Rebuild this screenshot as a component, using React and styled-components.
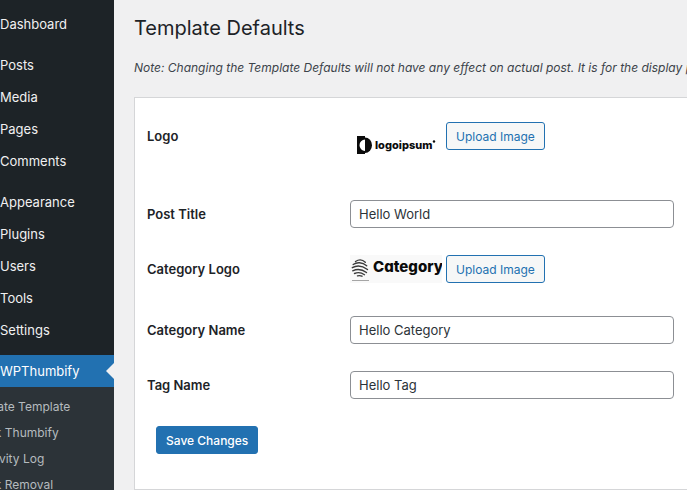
import React from "react";
import styled, { createGlobalStyle } from "styled-components";

const menuGroups = [
    ["Dashboard"],
    ["Posts", "Media", "Pages", "Comments"],
    ["Appearance", "Plugins", "Users", "Tools", "Settings"],
];

const subMenu = ["Create Template", "Bulk Thumbify", "Activity Log", "Bulk Removal"];

const LogoIpsum = () => (
    <svg width="92" height="46" viewBox="0 0 92 46" role="img" aria-label="logoipsum">
        <path d="M7 14h8v3.500a5.500 5.700 0 0 0 0 11.400V32H7z" fill="#0b0b0b" />
        <path d="M15 15.500a7 7.700 0 0 1 0 15.400z" fill="#0b0b0b" />
        <LogoText x="25" y="27" fontSize="11">logoipsum</LogoText>
        <circle cx="84" cy="19.500" r="1.200" fill="#0b0b0b" />
    </svg>
);

const CategoryLogo = () => (
    <svg width="92" height="28" viewBox="0 0 92 28" role="img" aria-label="Category">
        <rect width="92" height="28" fill="#f9f9f9" />
        <g fill="none" stroke="#3a3a3a" strokeWidth="1.400" strokeLinecap="round">
            <path d="M5.500 6.500c3-2 7-2 9.800.8" />
            <path d="M3.200 9.500c3.500-2.500 9-2.500 13.500 1.300" />
            <path d="M2.300 12.700c4.500-2.500 10-2 15.200 1.800" />
            <path d="M2.700 15.800c4.500-2.200 9.500-1.500 13.800 1.700" />
            <path d="M4.500 18.500c3.500-1.500 7-.900 10 1.200" />
            <path d="M7.500 20.900c1.500-.400 3.500-.200 4.500.300" />
        </g>
        <path d="M2 25.500h17" stroke="#a5a5a5" strokeWidth="1" />
        <LogoText x="23" y="17" fontSize="15">Category</LogoText>
    </svg>
);

const App = () => {
    const [values, setValues] = React.useState({
        title: "Hello World",
        category: "Hello Category",
        tag: "Hello Tag",
    });

    const onChange = (e) => {
        setValues({ ...values, [e.target.name]: e.target.value });
    };

    const renderField = (name, label) => (
        <Row>
            <Label as="label" htmlFor={name}>{label}</Label>
            <TextInput id={name} name={name} type="text" value={values[name]} onChange={onChange} />
        </Row>
    );

    return (
        <Page>
            <GlobalStyle />
            <Sidebar>
                {menuGroups.map((group, idx) => (
                    <MenuGroup key={idx}>
                        {group.map((item) => (
                            <li key={item}>
                                <MenuLink href="#">{item}</MenuLink>
                            </li>
                        ))}
                    </MenuGroup>
                ))}
                <MenuLink href="#" $active>WPThumbify</MenuLink>
                <SubMenu>
                    {subMenu.map((item) => (
                        <li key={item}>
                            <SubLink href="#">{item}</SubLink>
                        </li>
                    ))}
                </SubMenu>
            </Sidebar>

            <Main>
                <Title>Template Defaults</Title>
                <Note>
                    Note: Changing the Template Defaults will not have any effect on actual post. It is for the display purpose only.
                </Note>
                <Panel onSubmit={(e) => e.preventDefault()}>
                    <Row $height="51px">
                        <Label id="logo-label">Logo</Label>
                        <Upload>
                            <LogoIpsum />
                            <Button type="button" aria-describedby="logo-label">Upload Image</Button>
                        </Upload>
                    </Row>
                    {renderField("title", "Post Title")}
                    <Row $height="34px">
                        <Label id="category-logo-label">Category Logo</Label>
                        <Upload>
                            <CategoryLogo />
                            <Button type="button" aria-describedby="category-logo-label">Upload Image</Button>
                        </Upload>
                    </Row>
                    {renderField("category", "Category Name")}
                    {renderField("tag", "Tag Name")}
                    <Actions>
                        <Button type="submit" $primary>Save Changes</Button>
                    </Actions>
                </Panel>
            </Main>
        </Page>
    );
};

const GlobalStyle = createGlobalStyle`
  * {
    box-sizing: border-box;
  }
  body {
    margin: 0;
    background-color: #f0f0f1;
    color: #1d2327;
    font-family: Inter, Roboto, sans-serif;
    font-size: 13px;
  }
  ul {
    margin: 0;
    padding: 0;
    list-style: none;
  }
`

const Page = styled.div`
  display: flex;
  min-height: 100vh;
  overflow: hidden;
`

const Sidebar = styled.nav`
  flex: 0 0 114px;
  padding-top: 8px;
  overflow: hidden;
  background-color: #1d2327;
  display: flex;
  flex-direction: column;
`

const MenuGroup = styled.ul`
  margin-bottom: 9px;
`

const MenuLink = styled.a`
  display: block;
  position: relative;
  line-height: 32px;
  color: ${(props) => (props.$active ? "#fff" : "#f0f0f1")};
  background-color: ${(props) => (props.$active ? "#2271b1" : "transparent")};
  text-decoration: none;

  &::after {
    content: "";
    display: ${(props) => (props.$active ? "block" : "none")};
    position: absolute;
    right: 0;
    top: 8px;
    border: 8px solid transparent;
    border-left: 0;
    border-right-color: #f0f0f1;
  }
`

const SubMenu = styled.ul`
  flex: 1;
  padding-top: 7px;
  background-color: #2c3338;
`

const SubLink = styled.a`
  display: block;
  margin-left: -23px;
  font-size: 12px;
  line-height: 26px;
  color: #b5bbbf;
  white-space: nowrap;
  text-decoration: none;
`

const Main = styled.main`
  flex: 1;
  min-width: 0;
  padding: 14px 0 0 20px;
`

const Title = styled.h1`
  margin: 0;
  font-size: 20px;
  font-weight: 400;
  line-height: 28px;
`

const Note = styled.p`
  margin: 16px 0 20px;
  font-size: 12px;
  font-style: italic;
  line-height: 19px;
  color: #3c434a;
  white-space: nowrap;
`

const Panel = styled.form`
  display: flex;
  flex-direction: column;
  gap: 27px;
  padding: 24px 12px 35px;
  border: 1px solid #d5d6d8;
  border-right: 0;
  background-color: #fff;
`

const Row = styled.div`
  display: grid;
  grid-template-columns: 203px 1fr;
  align-items: start;
  min-height: ${(props) => props.$height || "28px"};
`

const Label = styled.span`
  font-weight: 600;
  line-height: 28px;
`

const Upload = styled.div`
  display: flex;
  align-items: flex-start;
  gap: 4px;
`

const TextInput = styled.input`
  width: 100%;
  max-width: 324px;
  height: 28px;
  padding: 0 8px;
  border: 1px solid #8c8f94;
  border-radius: 4px;
  background-color: #fff;
  color: #2c3338;
  font: inherit;
`

const Button = styled.button`
  height: 28px;
  padding: 0 9px;
  border: 1px solid #2271b1;
  border-radius: 3px;
  background-color: ${(props) => (props.$primary ? "#2271b1" : "#f6f7f7")};
  color: ${(props) => (props.$primary ? "#fff" : "#2271b1")};
  font-family: inherit;
  font-size: 12px;
  font-weight: ${(props) => (props.$primary ? 500 : 400)};
  white-space: nowrap;
  cursor: pointer;
`

const Actions = styled.div`
  padding-left: 9px;
`

const LogoText = styled.text`
  font-family: Inter, sans-serif;
  font-weight: 800;
  font-feature-settings: "cv11";
  fill: #0b0b0b;
`

export default App;
